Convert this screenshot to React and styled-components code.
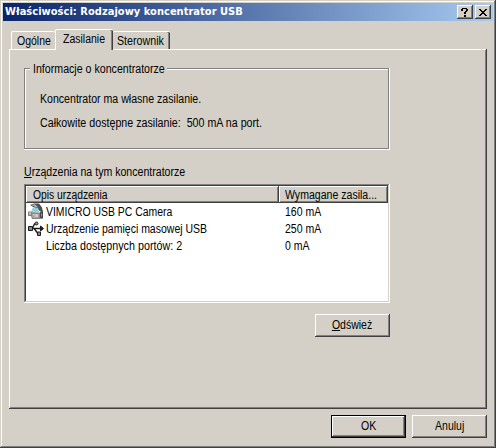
import React from "react";
import styled, { createGlobalStyle } from "styled-components";

const face = "#d4d0c8";
const shade = "#808080";
const dark = "#404040";

const GlobalStyle = createGlobalStyle`
  *, *::before, *::after { box-sizing: border-box; }
  body { margin: 0; background: ${face}; overflow: hidden; }
`;

const Dialog = styled.main`
  width: 496px;
  height: 448px;
  display: flex;
  flex-direction: column;
  padding: 3px;
  background: ${face};
  box-shadow: inset -1px -1px ${dark}, inset 1px 1px ${face}, inset -2px -2px ${shade}, inset 2px 2px #fff;
  font: 12px/14px "Liberation Sans", Arial, sans-serif;
  color: #000;
  cursor: default;
`;

const TitleBar = styled.header`
  flex: none;
  height: 18px;
  display: flex;
  align-items: center;
  gap: 2px;
  padding: 0 2px;
  background: linear-gradient(90deg, #0a246a, #a6caf0);
`;

const Title = styled.h1`
  flex: 1;
  margin: 0;
  color: #fff;
  font: bold 11px/16px "DejaVu Sans Condensed", "DejaVu Sans", sans-serif;
  font-stretch: condensed;
  letter-spacing: 0.03px;
  white-space: nowrap;
`;

const Raised = styled.button`
  display: flex;
  align-items: center;
  justify-content: center;
  padding: 0;
  border: 0;
  border-radius: 0;
  color: #000;
  background: ${face};
  font: inherit;
  box-shadow: inset -1px -1px ${dark}, inset 1px 1px #fff, inset -2px -2px ${shade};
`;

const CaptionButton = styled(Raised)`
  width: 16px;
  height: 14px;
`;

const PushButton = styled(Raised)`
  width: 75px;
  height: 23px;
  padding-bottom: 1px;
  ${(p) => p.$primary && `border: 1px solid #000;`}
`;

/* Condensed text, since the dialog face is narrower than Arial. */
const Label = styled.span`
  display: block;
  width: max-content;
  white-space: pre;
  transform: scaleX(${(p) => p.$narrow || 0.875});
  transform-origin: ${(p) => (p.$centered ? "center" : "left")};
`;

const Tabs = styled.nav`
  flex: none;
  height: 28px;
  display: flex;
  align-items: flex-end;
  padding-left: 8px;
`;

const Tab = styled.div`
  position: relative;
  z-index: ${(p) => (p.$active ? 2 : 0)};
  width: ${(p) => p.$width}px;
  height: ${(p) => (p.$active ? 21 : 18)}px;
  margin-bottom: ${(p) => (p.$active ? -1 : 0)}px;
  padding: 2px 0 0 ${(p) => p.$inset}px;
  background: ${face};
  border-top: 1px solid #fff;
  border-left: ${(p) => (p.$flush ? 0 : 1)}px solid #fff;
  border-radius: 2px 2px 0 0;
  ${(p) => p.$edge && `box-shadow: inset -1px 0 ${dark}, inset -2px 0 ${shade};`}
`;

const Page = styled.section`
  flex: none;
  width: 478px;
  height: 360px;
  margin-left: 6px;
  padding: 15px 0 0 15px;
  display: flex;
  flex-direction: column;
  align-items: flex-start;
  box-shadow: inset -1px -1px ${dark}, inset 1px 1px #fff, inset -2px -2px ${shade};
`;

const Group = styled.div`
  width: 366px;
  height: 87px;
  padding: 16px 0 0 16px;
  display: flex;
  flex-direction: column;
  gap: 10px;
  background:
    linear-gradient(${shade}, ${shade}) 0 4px / 365px 1px no-repeat,
    linear-gradient(${shade}, ${shade}) 0 84px / 365px 1px no-repeat,
    linear-gradient(${shade}, ${shade}) 0 4px / 1px 81px no-repeat,
    linear-gradient(${shade}, ${shade}) 364px 4px / 1px 81px no-repeat,
    linear-gradient(#fff, #fff) 1px 5px / 363px 1px no-repeat,
    linear-gradient(#fff, #fff) 0 85px / 366px 1px no-repeat,
    linear-gradient(#fff, #fff) 1px 5px / 1px 79px no-repeat,
    linear-gradient(#fff, #fff) 365px 4px / 1px 82px no-repeat;
`;

const GroupTitle = styled.div`
  width: 137px;
  margin: -18px 0 6px -10px;
  padding-left: 3px;
  background: ${face};
`;

const ListTitle = styled.div`
  margin: 14px 0 5px;
`;

const List = styled.div`
  width: 366px;
  height: 119px;
  padding: 2px;
  background: #fff;
  box-shadow: inset -1px -1px #fff, inset 1px 1px ${shade}, inset -2px -2px ${face}, inset 2px 2px ${dark};
`;

const Row = styled.div`
  display: grid;
  grid-template-columns: 253px 109px;
  height: 17px;
  align-items: center;
`;

const HeadRow = styled(Row)`
  align-items: stretch;
`;

const HeadCell = styled.div`
  padding: 2px 0 0 ${(p) => p.$inset}px;
  background: ${face};
  box-shadow: inset -1px -1px ${dark}, inset 1px 1px #fff, inset -2px -2px ${shade};
`;

const Device = styled.div`
  display: flex;
  align-items: center;
  gap: 2px;
  padding-left: 2px;
`;

const IconSlot = styled.span`
  width: 16px;
  height: 16px;
  display: block;
  svg { display: block; overflow: visible; }
`;

const Amount = styled.div`
  padding-left: 6px;
`;

const PageActions = styled.div`
  width: 366px;
  margin-top: 11px;
  display: flex;
  justify-content: flex-end;
`;

const Footer = styled.footer`
  display: flex;
  justify-content: flex-end;
  gap: 6px;
  padding: 6px 6px 0 0;
`;

const HelpGlyph = () => (
  <svg width="8" height="9" shapeRendering="crispEdges">
    <path d="M1 0h5v1H1zM0 1h2v2H0zM5 1h2v2H5zM4 3h2v1H4zM3 4h2v2H3zM3 7h2v2H3z" />
  </svg>
);

const CloseGlyph = () => (
  <svg width="8" height="7" shapeRendering="crispEdges">
    <path d="M0 0h2v1H0zM6 0h2v1H6zM1 1h2v1H1zM5 1h2v1H5zM2 2h4v1H2zM3 3h2v1H3zM2 4h4v1H2zM1 5h2v1H1zM5 5h2v1H5zM0 6h2v1H0zM6 6h2v1H6z" />
  </svg>
);

const CameraIcon = () => (
  <svg width="16" height="16" viewBox="0 0 16 16">
    <path d="M2 1 6-.5h5l3 4 1 4.500-3-.5-3-3.500-3-.5z" fill="#4a5052" />
    <path d="M3 .8 7 .2 10.500 3.500 7 3z" fill="#a9adad" />
    <path d="m5 3.500 5 .5 1 4-7 1-1-1.500z" fill="#8fd3da" />
    <path d="M0 7.500h3l1 1h8l1 6.500H4l-1-3H0z" fill="#858383" />
    <path d="M1 8.500h2v2H1zM4.500 10h6v3.500h-6z" fill="#cfc6c4" />
    <path d="m12 8.500 2-1.500 1 1v6l-1 1-2-1.500z" fill="#444" />
    <path d="M13 9.500h1v3h-1z" fill="#999" />
    <path d="M5 11.500h2v1H5z" fill="#b08080" />
  </svg>
);

const UsbIcon = () => (
  <svg width="16" height="16" viewBox="0 0 16 16" fill="none" stroke="#1c1c1c">
    <path d="M5 7.500h8M4.500 7l2-4h1M6.500 8l3 4h1" strokeWidth="1.400" />
    <path d="M.5 5.500h4v4h-4z" fill="#888" />
    <path d="M12.500 5 15.500 7.500 12.500 10z" fill="#1c1c1c" />
    <circle cx="8.500" cy="2.500" r="1.500" fill="#999" />
    <path d="M9.500 11h3v3.500h-3z" fill="#888" />
  </svg>
);

const devices = [
  { icon: <CameraIcon />, name: "VIMICRO USB PC Camera", power: "160 mA", narrow: 0.869 },
  { icon: <UsbIcon />, name: "Urządzenie pamięci masowej USB", power: "250 mA", narrow: 0.875 },
  { icon: null, name: "Liczba dostępnych portów: 2", power: "0 mA", narrow: 0.895 },
];

export default function App() {
  return (
    <>
      <GlobalStyle />
      <Dialog>
        <TitleBar>
          <Title>Właściwości: Rodzajowy koncentrator USB</Title>
          <CaptionButton aria-label="Pomoc"><HelpGlyph /></CaptionButton>
          <CaptionButton aria-label="Zamknij"><CloseGlyph /></CaptionButton>
        </TitleBar>
        <Tabs>
          <Tab $width={44} $inset={5}><Label>Ogólne</Label></Tab>
          <Tab $width={58} $inset={7} $active $edge><Label>Zasilanie</Label></Tab>
          <Tab $width={57} $inset={4} $flush $edge><Label $narrow={0.89}>Sterownik</Label></Tab>
        </Tabs>
        <Page>
          <Group>
            <GroupTitle><Label $narrow={0.886}>Informacje o koncentratorze</Label></GroupTitle>
            <Label $narrow={0.882}>Koncentrator ma własne zasilanie.</Label>
            <Label $narrow={0.89}>Całkowite dostępne zasilanie:  500 mA na port.</Label>
          </Group>
          <ListTitle><Label $narrow={0.882}><u>U</u>rządzenia na tym koncentratorze</Label></ListTitle>
          <List>
            <HeadRow>
              <HeadCell $inset={7}><Label $narrow={0.86}>Opis urządzenia</Label></HeadCell>
              <HeadCell $inset={6}><Label $narrow={0.88}>Wymagane zasila...</Label></HeadCell>
            </HeadRow>
            {devices.map((d) => (
              <Row key={d.name}>
                <Device><IconSlot>{d.icon}</IconSlot><Label $narrow={d.narrow}>{d.name}</Label></Device>
                <Amount><Label>{d.power}</Label></Amount>
              </Row>
            ))}
          </List>
          <PageActions><PushButton><Label $centered><u>O</u>dśwież</Label></PushButton></PageActions>
        </Page>
        <Footer>
          <PushButton $primary><Label $centered>OK</Label></PushButton>
          <PushButton><Label $centered>Anuluj</Label></PushButton>
        </Footer>
      </Dialog>
    </>
  );
}
